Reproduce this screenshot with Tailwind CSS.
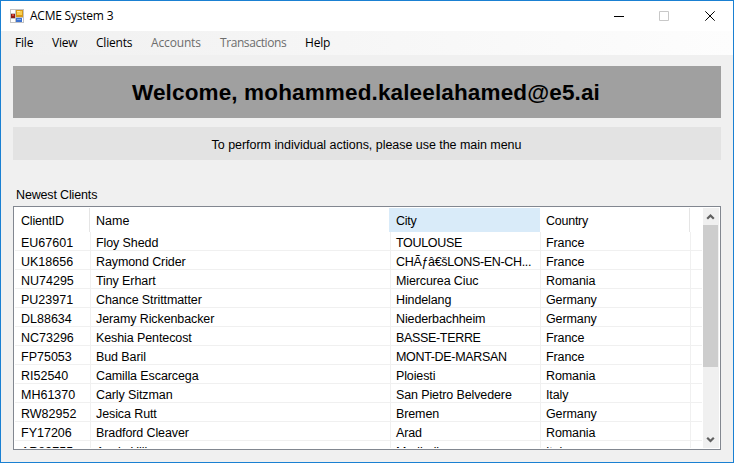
<!DOCTYPE html>
<html lang="en">
<head>
<meta charset="utf-8">
<title>ACME System 3</title>
<script src="https://cdn.jsdelivr.net/npm/@tailwindcss/browser@4"></script>
</head>
<body class="w-[734px] h-[463px] overflow-hidden">
<div class="w-[734px] h-[463px] border border-[#1a80d2] bg-[#f0f0f0] flex flex-col text-black text-[12.5px] font-['Liberation_Sans',Arial,sans-serif]">
  <header class="h-[30px] shrink-0 bg-white flex items-center pl-[9px] font-['Open_Sans',sans-serif] text-[12px]">
    <svg class="shrink-0" width="14" height="14" viewBox="0 0 14 14" shape-rendering="crispEdges">
      <path fill="#c3c3c3" d="M0 0h14v14H0z"/>
      <path fill="#fff" d="M1 1h4v3H1zM1 10h4v3H1zM12 9h1v4h-1z"/>
      <path fill="#8e1b14" d="M1 5h4v4H1z"/><path fill="#d4483c" d="M2 5h2v2H2z"/>
      <path fill="#d79a18" d="M6 1h7v7H6z"/><path fill="#f9cf4e" d="M7 2h5v4H7z"/><path fill="#ffe79a" d="M7 2h3v1H7z"/>
      <path fill="#3d72cf" d="M6 9h6v4H6z"/><path fill="#7eabed" d="M7 10h4v1H7z"/>
    </svg>
    <h1 class="ml-[6px] whitespace-nowrap tracking-[-0.22px]">ACME System 3</h1>
    <div class="ml-auto flex">
      <svg width="138" height="28" viewBox="0 0 138 28" fill="none">
        <path stroke="#000" d="M19 14.5h10"/>
        <path stroke="#c8c8c8" d="M64.5 9.5h9v9h-9z"/>
        <path stroke="#000" d="M110.3 9.3l9.4 9.4M119.7 9.3l-9.4 9.4"/>
      </svg>
    </div>
  </header>
  <nav class="h-[24px] shrink-0 bg-linear-to-r from-[#f0f0f0] to-[#fdfdfd] flex items-center font-['Open_Sans',sans-serif] text-[12px] whitespace-nowrap">
    <span class="ml-[14px] w-[37px] tracking-[-0.2px]">File</span>
    <span class="w-[44px] tracking-[-0.2px]">View</span>
    <span class="w-[55px] tracking-[-0.2px]">Clients</span>
    <span class="w-[69px] text-[#6d6d6d] tracking-[-0.15px]">Accounts</span>
    <span class="w-[85px] text-[#6d6d6d] tracking-[-0.42px]">Transactions</span>
    <span class="tracking-[-0.2px]">Help</span>
  </nav>
  <main class="flex flex-col px-[12px] pt-[11px]">
    <div class="h-[52px] bg-[#a0a0a0] flex items-center justify-center pt-[2px] pr-[2px] font-bold text-[22.5px] tracking-[0.14px] whitespace-nowrap"><span>Welcome, mohammed.kaleelahamed@e5.ai</span></div>
    <div class="mt-[9px] h-[33px] bg-[#e3e3e3] flex items-center justify-center pt-[4px] pr-px tracking-[-0.04px] whitespace-nowrap"><span>To perform individual actions, please use the main menu</span></div>
    <h2 class="mt-[27px] h-[19px] pl-[3px] leading-[16px] tracking-[-0.15px]">Newest Clients</h2>
    <section class="h-[244px] w-[708px] border border-[#828790] bg-white p-px flex overflow-hidden">
      <div id="list" class="w-[687px] overflow-hidden flex flex-col whitespace-nowrap">
        <div class="h-[24px] shrink-0 flex leading-[26px]">
          <div class="w-[75px] border-r border-[#e5e5e5] pl-[6px] tracking-[-0.2px]">ClientID</div>
          <div class="w-[299px] pl-[6px]">Name</div>
          <div class="w-[151px] bg-[#d9ebf9] pl-[7px] tracking-[-0.3px]">City</div>
          <div class="w-[150px] border-r border-[#e5e5e5] pl-[6px] tracking-[-0.25px]">Country</div>
        </div>
      </div>
      <div class="ml-px w-[16px] bg-[#f0f0f0] flex flex-col">
        <svg width="16" height="17" viewBox="0 0 16 17" fill="none"><path stroke="#606060" stroke-width="2.2" d="M4.2 10.8 7.5 7.5l3.3 3.3"/></svg>
        <div class="h-[142px] w-[15px] bg-[#cdcdcd]"></div>
        <svg class="mt-auto" width="16" height="17" viewBox="0 0 16 17" fill="none"><path stroke="#606060" stroke-width="2.2" d="M4.2 6.7 7.5 10l3.3-3.3"/></svg>
      </div>
    </section>
  </main>
</div>
<script>
const rows = [
  ["EU67601","Floy Shedd","TOULOUSE","France"],
  ["UK18656","Raymond Crider","CHÃƒâ€šLONS-EN-CH...","France"],
  ["NU74295","Tiny Erhart","Miercurea Ciuc","Romania"],
  ["PU23971","Chance Strittmatter","Hindelang","Germany"],
  ["DL88634","Jeramy Rickenbacker","Niederbachheim","Germany"],
  ["NC73296","Keshia Pentecost","BASSE-TERRE","France"],
  ["FP75053","Bud Baril","MONT-DE-MARSAN","France"],
  ["RI52540","Camilla Escarcega","Ploiesti","Romania"],
  ["MH61370","Carly Sitzman","San Pietro Belvedere","Italy"],
  ["RW82952","Jesica Rutt","Bremen","Germany"],
  ["FY17206","Bradford Cleaver","Arad","Romania"],
  ["AR83755","Annis Hill","Medjedja","Italy"]
];
// All-capital city names are set a little tighter than mixed-case ones.
const isCaps = (s) => !/[a-z]/.test(s);
const list = document.getElementById("list");
for (const [id, name, city, country] of rows) {
  list.insertAdjacentHTML("beforeend", `
    <div class="h-[19px] shrink-0 flex border-b border-[#f0f0f0] leading-[22px]">
      <div class="w-[76px] border-r border-[#f0f0f0] pl-[6px]">${id}</div>
      <div class="w-[300px] border-r border-[#f0f0f0] pl-[5px] tracking-[-0.1px]">${name}</div>
      <div class="w-[150px] border-r border-[#f0f0f0] pl-[5px] ${isCaps(city) ? "tracking-[-0.33px]" : "tracking-[-0.12px]"}">${city}</div>
      <div class="w-[150px] border-r border-[#f0f0f0] pl-[5px] tracking-[-0.1px]">${country}</div>
    </div>`);
}
</script>
</body>
</html>
